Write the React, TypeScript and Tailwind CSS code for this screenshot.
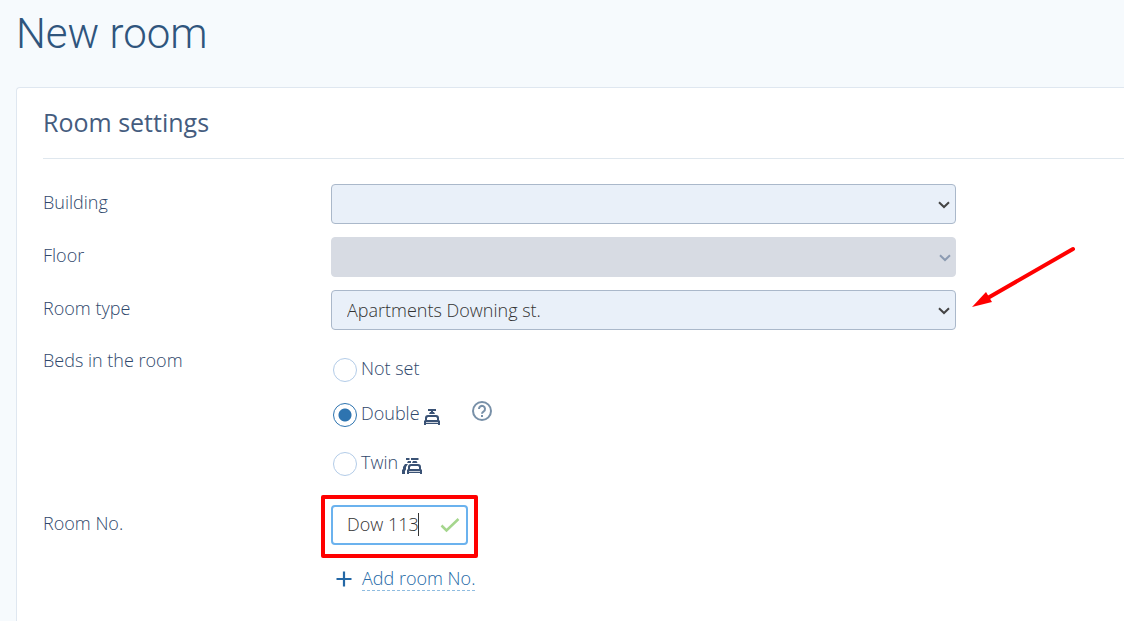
import { useState, type ReactNode } from 'react';

const BEDS = [
  { value: 'none', label: 'Not set' },
  { value: 'double', label: 'Double' },
  { value: 'twin', label: 'Twin' },
];

function Chevron({ className }: { className: string }) {
  return (
    <svg viewBox="0 0 12 8" className={className} fill="none" stroke="currentColor" strokeWidth="2">
      <path d="M1 1.2 6 6l5-4.8" />
    </svg>
  );
}

function DoubleBedIcon() {
  return (
    <svg viewBox="0 0 16 18" className="mt-1 h-[18px] w-4 text-[#3a5275]" fill="currentColor">
      <path d="M4 1h8v2H4zM7 3h2v1h1l1 2H5l1-2h1z" />
      <path d="M4 7h8a3 3 0 0 1 3 3v2l1 1v4h-2v-1H2v1H0v-4l1-1v-2a3 3 0 0 1 3-3zm0 2-1 1v2h10v-2l-1-1zM2 14v.700h12V14z" fillRule="evenodd" />
    </svg>
  );
}

function TwinBedIcon() {
  return (
    <svg viewBox="0 0 20 18" className="mt-1 h-[18px] w-5 text-[#3a5275]" fill="currentColor">
      <path d="M4 1h3.500v2H4zM9 1h7.500v2H9zM6 4h3v2H5zM11 4h3.500l1 2H10z" />
      <path d="M3 7h3L4 10v2.500L3 14v3H0v-4l1-1v-2z" />
      <path d="M9 7h7a3 3 0 0 1 3 3v2l1 1v4h-2v-1H7v1H5v-4l1-1v-2a3 3 0 0 1 3-3zm0 2-1 1v2h9v-2l-1-1zM7 14v.700h11V14z" fillRule="evenodd" />
    </svg>
  );
}

function HelpIcon() {
  return (
    <svg viewBox="0 0 20 20" className="h-5 w-5" fill="none" stroke="currentColor" strokeWidth="2">
      <circle cx="10" cy="10" r="9" />
      <path d="M7 8a3 3 0 1 1 4.800 2.300C10.600 11.100 10 11.600 10 12.800" />
      <path d="M9 14h2v2H9z" fill="currentColor" stroke="none" />
    </svg>
  );
}

function Row({ id, label, children }: { id: string; label: string; children: ReactNode }) {
  return (
    <div className="flex items-start">
      <label htmlFor={id} className="w-72 shrink-0 pt-1.5">
        {label}
      </label>
      {children}
    </div>
  );
}

function Select({ id, disabled, options }: { id: string; disabled?: boolean; options: string[] }) {
  return (
    <div className="relative w-full max-w-[625px]">
      <select
        id={id}
        disabled={disabled}
        className="h-10 w-full appearance-none rounded border border-[#aab8ca] bg-[#e9f0f9] px-[15px] text-[#333333] disabled:border-[#d7dbe3] disabled:bg-[#d7dbe3] disabled:opacity-100"
      >
        {options.map((o) => (
          <option key={o}>{o}</option>
        ))}
      </select>
      <Chevron
        className={
          disabled
            ? 'pointer-events-none absolute right-[5px] top-[17px] h-2 w-3 text-[#8c9bb2]'
            : 'pointer-events-none absolute right-1.5 top-[17px] h-2 w-3 text-[#444444]'
        }
      />
    </div>
  );
}

export default function App() {
  const [bed, setBed] = useState('double');
  const [roomNo, setRoomNo] = useState('Dow 113');

  return (
    <div className="min-h-screen overflow-hidden bg-[#f6fafd] pl-4 font-['Open_Sans',sans-serif] text-[18px] font-light leading-6 text-[#2f486c]">
      <h1 className="pt-[9px] font-['Roboto',sans-serif] text-[42px] font-light leading-[50px] text-[#2f557d]">New room</h1>

      <section className="relative mt-7 min-h-[calc(100vh-87px)] rounded-tl border-l border-t border-[#dfe7f0] bg-white pl-[26px]">
        <h2 className="border-b border-[#dfe7ee] pb-[19px] pt-[17px] text-[25px] font-normal leading-[34px] text-[#455c7e]">
          Room settings
        </h2>

        <form className="pt-[25px]" onSubmit={(e) => e.preventDefault()}>
          <div className="flex flex-col gap-[13px]">
            <Row id="building" label="Building">
              <Select id="building" options={['']} />
            </Row>
            <Row id="floor" label="Floor">
              <Select id="floor" options={['']} disabled />
            </Row>
            <Row id="room-type" label="Room type">
              <Select id="room-type" options={['Apartments Downing st.']} />
            </Row>
          </div>

          <fieldset className="mt-3 flex items-start">
            <legend className="float-left w-72 shrink-0 pt-1.5">Beds in the room</legend>
            <div className="flex flex-col pl-[2px] pt-4">
              {BEDS.map((b) => (
                <div key={b.value} className={b.value === 'none' ? 'flex h-[45px] items-start' : 'flex h-[49px] items-start'}>
                  <label className="flex h-6 items-center gap-1">
                    <input
                      type="radio"
                      name="beds"
                      value={b.value}
                      checked={bed === b.value}
                      onChange={() => setBed(b.value)}
                      className="h-6 w-6 appearance-none rounded-full border border-[#b3cce8] bg-white checked:border-[#2e74b0] checked:bg-[radial-gradient(circle,#2e74b0_6px,transparent_7px)]"
                    />
                    <span className="pb-1">{b.label}</span>
                    {b.value === 'double' && <DoubleBedIcon />}
                    {b.value === 'twin' && <TwinBedIcon />}
                  </label>
                  {b.value === 'double' && (
                    <button type="button" aria-label="Help" className="-mt-0.5 ml-8 text-[#7890a8]">
                      <HelpIcon />
                    </button>
                  )}
                </div>
              ))}
            </div>
          </fieldset>

          <div className="mt-1">
            <Row id="room-no" label="Room No.">
              <div>
                <div className="relative w-[137px]">
                  <input
                    id="room-no"
                    value={roomNo}
                    onChange={(e) => setRoomNo(e.target.value)}
                    className="h-10 w-full rounded border-2 border-[#6bb2ee] bg-white pb-0.5 pl-3.5 pr-8 text-[#333333] outline-none"
                  />
                  <span className="pointer-events-none absolute left-[87px] top-2 h-[23px] w-px bg-[#333333]" />
                  <svg viewBox="0 0 20 16" className="pointer-events-none absolute right-2 top-3 h-4 w-5" fill="none" stroke="#a5d68d" strokeWidth="2.500">
                    <path d="M1.500 8.500 6.500 13.500 18.500 2" />
                  </svg>
                  <span className="pointer-events-none absolute -inset-x-2.5 -bottom-[13px] -top-2.5 rounded-xs border-4 border-[#ff0000]" />
                </div>
                <a href="#add" className="mt-[21px] flex items-center pl-[5px] text-[#2468a6]">
                  <svg viewBox="0 0 16 16" className="mr-[10px] h-4 w-4" stroke="currentColor" strokeWidth="2.200">
                    <path d="M8 .5v15M.5 8h15" />
                  </svg>
                  <span className="border-b border-dashed border-[#8fbce0]">Add room No.</span>
                </a>
              </div>
            </Row>
          </div>
        </form>

        <svg viewBox="0 0 104 62" className="pointer-events-none absolute left-[955px] top-[157px] h-[62px] w-[104px]">
          <path d="M101 4 14 54" stroke="#ff0000" strokeWidth="4" strokeLinecap="round" />
          <path d="M0 62 14 47 20 57z" fill="#ff0000" />
        </svg>
      </section>
    </div>
  );
}
